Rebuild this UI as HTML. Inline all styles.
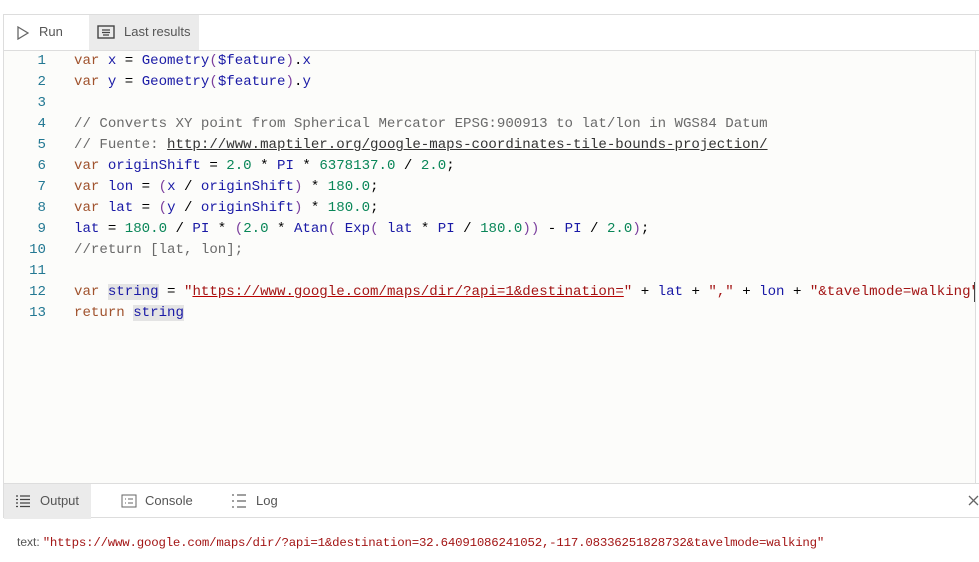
<!DOCTYPE html>
<html><head><style>
*{margin:0;padding:0;box-sizing:border-box}
body{width:979px;height:562px;background:#fff;position:relative;overflow:hidden;font-family:"Liberation Sans",sans-serif}
.top{position:absolute;left:3px;top:14px;width:976px;height:37px;border-top:1px solid #ddd;border-bottom:1px solid #ddd;border-left:1px solid #ddd;background:#fff}
.tab{position:absolute;top:0;height:35px;font-size:13px;color:#555;line-height:33px}
.ed{position:absolute;left:3px;top:51px;width:973px;height:432px;background:#fcfcfa;border-left:1px solid #ddd;border-right:1px solid #ddd;overflow:hidden}
.ln{position:absolute;left:0;width:42px;text-align:right;font:14.1px/21px "Liberation Mono",monospace;color:#237893}
.code{position:absolute;left:70px;white-space:pre;font:14.1px/21px "Liberation Mono",monospace;color:#000}
.k{color:#a0522d}.i{color:#1a1aa6}.n{color:#098658}.c{color:#6a6a6a}.s{color:#a31515}.p{color:#7a3e9d}
.u{text-decoration:underline;text-decoration-color:#b00;}
.hl{background:#e4e4e4}
.bot{position:absolute;left:3px;top:483px;width:976px;height:35px;border-top:1px solid #ddd;border-bottom:1px solid #ddd;border-left:1px solid #ddd;background:#fff}
.out{position:absolute;left:17px;top:535px;font-size:12px;color:#555;white-space:pre}
.out span{font:12.4px "Liberation Mono",monospace;letter-spacing:-0.2px;color:#a31515;margin-left:3px}
</style></head><body>
<div class="top">
 <div class="tab" style="left:0;width:84px">
  <svg style="position:absolute;left:13px;top:11px" width="12" height="14" viewBox="0 0 12 14"><path d="M1 1 L11 7 L1 13 Z" fill="none" stroke="#666" stroke-width="1.3"/></svg>
  <span style="position:absolute;left:35px">Run</span></div>
 <div class="tab" style="left:85px;width:110px;background:#ebebeb">
  <svg style="position:absolute;left:8px;top:10px" width="18" height="14" viewBox="0 0 18 14"><rect x="1" y="1" width="16" height="12" fill="none" stroke="#444" stroke-width="1.4"/><path d="M5 5h8M5 7.5h8M6 10h6" stroke="#444" stroke-width="1.2"/></svg>
  <span style="position:absolute;left:35px">Last results</span></div>
</div>
<div class="ed">
 <div class="ln" style="top:0">1<br>2<br>3<br>4<br>5<br>6<br>7<br>8<br>9<br>10<br>11<br>12<br>13</div>
 <div class="code" style="top:0"><span class="k">var</span> <span class="i">x</span> = <span class="i">Geometry</span><span class="p">(</span><span class="i">$feature</span><span class="p">)</span>.<span class="i">x</span>
<span class="k">var</span> <span class="i">y</span> = <span class="i">Geometry</span><span class="p">(</span><span class="i">$feature</span><span class="p">)</span>.<span class="i">y</span>

<span class="c">// Converts XY point from Spherical Mercator EPSG:900913 to lat/lon in WGS84 Datum</span>
<span class="c">// Fuente: <span style="text-decoration:underline;color:#333">http://www.maptiler.org/google-maps-coordinates-tile-bounds-projection/</span></span>
<span class="k">var</span> <span class="i">originShift</span> = <span class="n">2.0</span> * <span class="i">PI</span> * <span class="n">6378137.0</span> / <span class="n">2.0</span>;
<span class="k">var</span> <span class="i">lon</span> = <span class="p">(</span><span class="i">x</span> / <span class="i">originShift</span><span class="p">)</span> * <span class="n">180.0</span>;
<span class="k">var</span> <span class="i">lat</span> = <span class="p">(</span><span class="i">y</span> / <span class="i">originShift</span><span class="p">)</span> * <span class="n">180.0</span>;
<span class="i">lat</span> = <span class="n">180.0</span> / <span class="i">PI</span> * <span class="p">(</span><span class="n">2.0</span> * <span class="i">Atan</span><span class="p">(</span> <span class="i">Exp</span><span class="p">(</span> <span class="i">lat</span> * <span class="i">PI</span> / <span class="n">180.0</span><span class="p">))</span> - <span class="i">PI</span> / <span class="n">2.0</span><span class="p">)</span>;
<span class="c">//return [lat, lon];</span>

<span class="k">var</span> <span class="i hl">string</span> = <span class="s">"<span class="u">https://www.google.com/maps/dir/?api=1&amp;destination=</span>"</span> + <span class="i">lat</span> + <span class="s">","</span> + <span class="i">lon</span> + <span class="s">"&amp;tavelmode=walking"</span>
<span class="k">return</span> <span class="i hl">string</span></div>
 <div style="position:absolute;left:970px;top:231px;width:3px;height:20px;background:#444"></div>
</div>
<div class="bot">
 <div class="tab" style="left:0;width:87px;background:#ebebeb">
  <svg style="position:absolute;left:11px;top:10px" width="16" height="14" viewBox="0 0 16 14"><path d="M1 2h2M5 2h10M5 5.5h10M5 9h10M5 12.5h10M1 5.5h2M1 9h2M1 12.5h2" stroke="#444" stroke-width="1.3"/></svg>
  <span style="position:absolute;left:36px">Output</span></div>
 <div class="tab" style="left:87px;width:110px">
  <svg style="position:absolute;left:30px;top:10px" width="16" height="14" viewBox="0 0 16 14"><rect x="1" y="1" width="14" height="12" fill="none" stroke="#666"/><path d="M4 5h1M4 9h1M7 5h5M7 9h5" stroke="#666"/></svg>
  <span style="position:absolute;left:54px">Console</span></div>
 <div class="tab" style="left:197px;width:90px">
  <svg style="position:absolute;left:30px;top:9px" width="16" height="16" viewBox="0 0 16 16"><path d="M1 2h2M6 2h9M1 8h2M6 8h9M1 14h2M6 14h9" stroke="#666" stroke-width="1.3"/></svg>
  <span style="position:absolute;left:55px">Log</span></div>
 <svg style="position:absolute;left:964px;top:11px" width="11" height="11" viewBox="0 0 11 11"><path d="M1 1L10 10M10 1L1 10" stroke="#666" stroke-width="1.3"/></svg>
</div>
<div class="out">text:<span>"https://www.google.com/maps/dir/?api=1&amp;destination=32.64091086241052,-117.08336251828732&amp;tavelmode=walking"</span></div>
</body></html>
